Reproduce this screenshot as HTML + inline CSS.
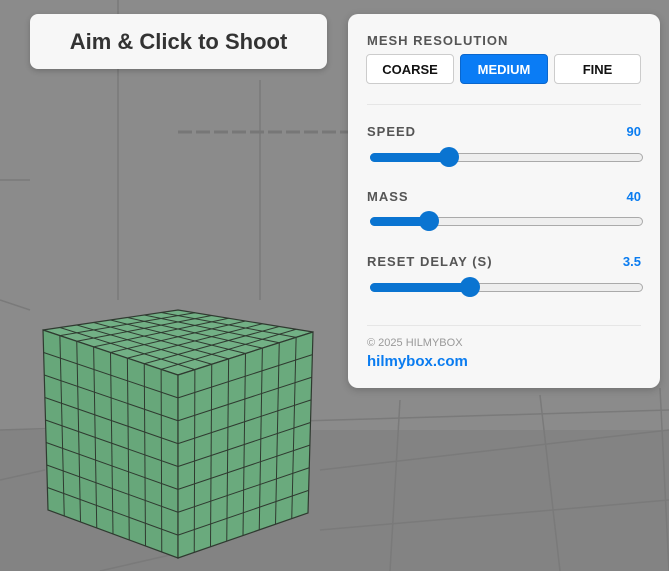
<!DOCTYPE html>
<html><head><meta charset="utf-8"><style>
body{margin:0;width:669px;height:571px;overflow:hidden;background:#8c8c8c;font-family:"Liberation Sans",sans-serif;position:relative}
#bg{position:absolute;left:0;top:0}
.title{position:absolute;left:30px;top:14px;width:297px;height:55px;background:#f7f7f7;border-radius:8px;font-size:22px;font-weight:bold;color:#333;text-align:center;line-height:55px;box-shadow:0 2px 6px rgba(0,0,0,.2)}
.panel{position:absolute;left:348px;top:14px;width:312px;height:374px;background:#f7f7f7;border-radius:10px;box-shadow:0 2px 8px rgba(0,0,0,.2)}
.lbl{position:absolute;left:19px;font-size:13px;font-weight:bold;color:#555;letter-spacing:1px}
.val{position:absolute;right:19px;font-size:13px;font-weight:bold;color:#0a7cf0}
.btn{position:absolute;top:40px;height:30px;border:1px solid #ccc;border-radius:4px;background:#fff;font-size:13px;font-weight:bold;color:#111;text-align:center;line-height:30px;box-sizing:border-box}
.track{position:absolute;left:22px;width:273px;height:9px;border:1px solid #aaa;border-radius:5px;background:#eee;box-sizing:border-box}
.fill{position:absolute;left:22px;height:9px;border-radius:5px;background:#0a74d1}
.thumb{position:absolute;width:20px;height:20px;border-radius:50%;background:#0a74d1}
.hr{position:absolute;left:19px;right:19px;height:1px;background:#e6e6e6}
</style></head><body>
<svg id="bg" width="669" height="571">
<rect width="669" height="571" fill="#8b8b8b"/>
<rect x="0" y="430" width="669" height="141" fill="#838383"/>
<g stroke="#7a7a7a" stroke-width="1.5" fill="none">
<line x1="0" y1="430" x2="669" y2="410"/>
<line x1="118" y1="0" x2="118" y2="300"/>
<line x1="260" y1="80" x2="260" y2="300"/>
<line x1="0" y1="180" x2="30" y2="180"/>
<line x1="0" y1="480" x2="45" y2="470"/>
<line x1="320" y1="470" x2="669" y2="430"/>
<line x1="320" y1="530" x2="669" y2="500"/>
<line x1="100" y1="571" x2="170" y2="555"/>
<line x1="400" y1="400" x2="390" y2="571"/>
<line x1="540" y1="395" x2="560" y2="571"/>
<line x1="660" y1="388" x2="669" y2="571"/>
<line x1="0" y1="300" x2="30" y2="310"/>
</g>
<line x1="178" y1="132" x2="348" y2="132" stroke="#777" stroke-width="3" stroke-dasharray="14 4"/>
<g id="cube"></g>
</svg>
<div class="title">Aim &amp; Click to Shoot</div>
<div class="panel">
<div class="lbl" style="top:19px">MESH RESOLUTION</div>
<div class="btn" style="left:18px;width:88px">COARSE</div>
<div class="btn" style="left:112px;width:88px;background:#0a7cf5;border-color:#0a66cc;color:#fff">MEDIUM</div>
<div class="btn" style="left:206px;width:87px">FINE</div>
<div class="hr" style="top:90px"></div>
<div class="lbl" style="top:110px">SPEED</div><div class="val" style="top:110px">90</div>
<div class="track" style="top:139px"></div><div class="fill" style="top:139px;width:80px"></div><div class="thumb" style="left:91px;top:133px"></div>
<div class="lbl" style="top:175px">MASS</div><div class="val" style="top:175px">40</div>
<div class="track" style="top:203px"></div><div class="fill" style="top:203px;width:60px"></div><div class="thumb" style="left:71px;top:197px"></div>
<div class="lbl" style="top:240px">RESET DELAY (S)</div><div class="val" style="top:240px">3.5</div>
<div class="track" style="top:269px"></div><div class="fill" style="top:269px;width:100px"></div><div class="thumb" style="left:112px;top:263px"></div>
<div class="hr" style="top:311px"></div>
<div style="position:absolute;left:19px;top:323px;font-size:11px;color:#999">© 2025 HILMYBOX</div>
<div style="position:absolute;left:19px;top:339px;font-size:15px;font-weight:bold;color:#0a7cf0">hilmybox.com</div>
</div>
<script>
var g=document.getElementById('cube'),ns='http://www.w3.org/2000/svg';
function poly(p,f){var e=document.createElementNS(ns,'polygon');e.setAttribute('points',p.map(a=>a.join(',')).join(' '));e.setAttribute('fill',f);e.setAttribute('stroke','#2f3a30');e.setAttribute('stroke-width','1.2');g.appendChild(e);}
function L(a,b,t){return[a[0]+(b[0]-a[0])*t,a[1]+(b[1]-a[1])*t]}
function face(a,b,c,d,f){poly([a,b,c,d],f);var n=8;for(var i=1;i<n;i++){var t=i/n;var p1=L(a,b,t),p2=L(d,c,t);var e=document.createElementNS(ns,'line');e.setAttribute('x1',p1[0]);e.setAttribute('y1',p1[1]);e.setAttribute('x2',p2[0]);e.setAttribute('y2',p2[1]);e.setAttribute('stroke','#2f3a30');e.setAttribute('stroke-width','1');g.appendChild(e);p1=L(a,d,t);p2=L(b,c,t);e=document.createElementNS(ns,'line');e.setAttribute('x1',p1[0]);e.setAttribute('y1',p1[1]);e.setAttribute('x2',p2[0]);e.setAttribute('y2',p2[1]);e.setAttribute('stroke','#2f3a30');e.setAttribute('stroke-width','1');g.appendChild(e);}}
var TL=[43,330],TB=[178,310],TR=[313,332],F=[178,375],BL=[48,510],BR=[308,513],BF=[178,558];
face(TL,TB,TR,F,'#72b085');
face(TL,F,BF,BL,'#67a77a');
face(F,TR,BR,BF,'#6aaa7d');
</script>
</body></html>
